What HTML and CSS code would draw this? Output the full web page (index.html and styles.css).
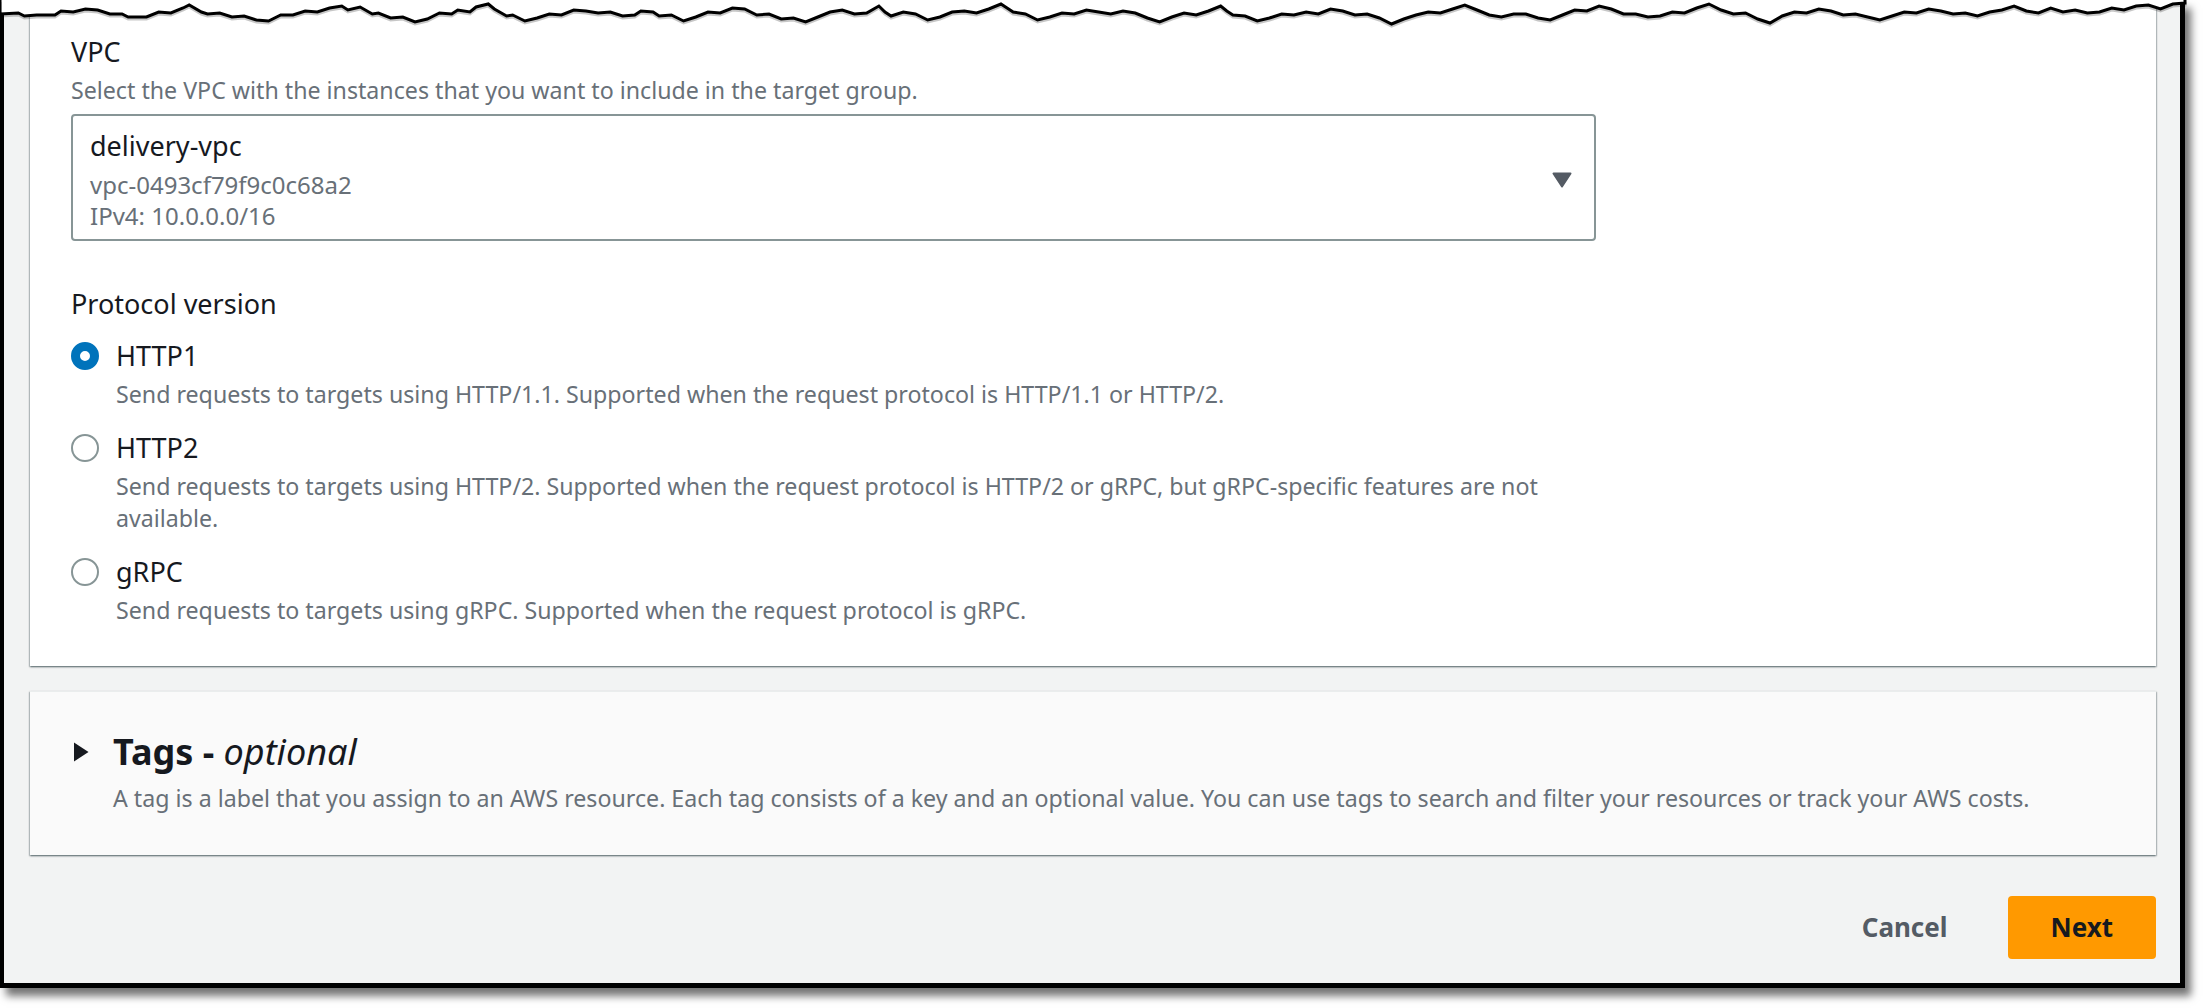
FILE: index.html
```html
<!DOCTYPE html>
<html lang="en">
<head>
<meta charset="utf-8">
<title>Target group - VPC and protocol</title>
<link rel="stylesheet" href="styles.css">
</head>
<body>
<div class="frame">
  <svg class="torn" viewBox="0 0 179 40" preserveAspectRatio="none" aria-hidden="true">
    <defs>
      <polyline id="edge" vector-effect="non-scaling-stroke" points="0,0 0,14 1.5,13 2,16 3,15 4.5,15 5,11 6,12 7,9 8,10 9,14 10,14 10.5,17 12,17 13,12 14,13 15,8 15.5,5 16.5,12 17,14 18,13 19,17 20,16 21,20 22,21 23,15 24,15 25,11 26,12 27,8 28,6 28.5,10 29.5,7 30.5,14 31,13 32,18 33,17 34,22 35,19 36,13 37,14 37.5,10 38.5,12 39,7 40,4 40.5,9 41.5,16 42,15 43,21 44,18 45,14 46,15 47,10 48,11 49,13 50,12 51,16 52,15 52.5,11 53.5,12 54,16 55,15 56,21 57,17 58,12 59,13 60,8 61,9 62,15 63,14 64,19 65,18 66,22 67,17 68,12 69,10 70,14 71,13 72,6 72.5,12 73,16 74,12 75,14 76,20 77,17 78,12 79,11 80,13 81,9 82,4 82.5,8 83,12 84,14 85,20 86,17 87,13 88,14 89,10 90,12 91,14 92,11 93,13 94,18 95,22 96,17 97,13 98,15 99,11 100,6 100.5,11 101,15 102,16 103,21 104,18 105,14 106,15 107,12 108,14 109,9 110,11 111,15 112,14 113,18 114,24 115,19 116,15 117,12 118,13 119,9 120,5 121,10 122,15 123,17 124,14 125,14 126,18 127,20 128,15 129,10 130,11 131,6 132,9 133,14 134,14 135,17 136,16 137,12 138,13 139,8 140,4 141,10 142,14 143,13 144,19 145,23 146,16 147,12 148,13 149,9 150,11 151,15 152,14 153,17 154,20 155,16 156,12 157,13 158,9 159,11 160,14 161,13 162,16 163,12 164,10 165,6 166,11 167,13 168,8 169,12 170,10 171,13 172,12 173,8 174,10 175,6 176,5 177,9 178,4 179,3 179,0"/>
    </defs>
    <use href="#edge" class="torn-fill"/>
    <use href="#edge" class="torn-shade" transform="translate(0 2)"/>
    <use href="#edge" class="torn-line"/>
  </svg>

  <section class="card">
    <div class="field">
      <div class="label">VPC</div>
      <div class="desc">Select the VPC with the instances that you want to include in the target group.</div>
      <div class="select">
        <div class="select-value">
          <div class="opt-name">delivery-vpc</div>
          <div class="opt-meta">vpc-0493cf79f9c0c68a2</div>
          <div class="opt-meta">IPv4: 10.0.0.0/16</div>
        </div>
        <svg class="caret" width="20" height="16" viewBox="0 0 20 16" aria-hidden="true"><path d="M1.5 1.5 H18.5 L10 14.5 Z"/></svg>
      </div>
    </div>

    <div class="field protocol">
      <div class="label">Protocol version</div>
      <div class="radios">
        <div class="radio-opt">
          <span class="radio checked"></span>
          <div class="radio-text">
            <div class="radio-label">HTTP1</div>
            <div class="desc radio-desc">Send requests to targets using HTTP/1.1. Supported when the request protocol is HTTP/1.1 or HTTP/2.</div>
          </div>
        </div>
        <div class="radio-opt">
          <span class="radio"></span>
          <div class="radio-text">
            <div class="radio-label">HTTP2</div>
            <div class="desc radio-desc">Send requests to targets using HTTP/2. Supported when the request protocol is HTTP/2 or gRPC, but gRPC-specific features are not available.</div>
          </div>
        </div>
        <div class="radio-opt">
          <span class="radio"></span>
          <div class="radio-text">
            <div class="radio-label">gRPC</div>
            <div class="desc radio-desc">Send requests to targets using gRPC. Supported when the request protocol is gRPC.</div>
          </div>
        </div>
      </div>
    </div>
  </section>

  <section class="card tags">
    <div class="tags-head">
      <svg class="expand" width="20" height="20" viewBox="0 0 20 20" aria-hidden="true"><path d="M3 0.5 L17.5 10 L3 19.5 Z"/></svg>
      <h2 class="tags-title">Tags - <em>optional</em></h2>
    </div>
    <div class="desc tags-desc">A tag is a label that you assign to an AWS resource. Each tag consists of a key and an optional value. You can use tags to search and filter your resources or track your AWS costs.</div>
  </section>

  <div class="actions">
    <button class="btn btn-link" type="button">Cancel</button>
    <button class="btn btn-primary" type="button">Next</button>
  </div>
</div>
</body>
</html>
```

FILE: styles.css
```css
* { box-sizing: border-box; }

html, body {
  margin: 0;
  padding: 0;
  background: #ffffff;
}

body {
  font-family: "Noto Sans", "Open Sans", sans-serif;
  color: #16191f;
  width: 2204px;
  height: 1008px;
  overflow: hidden;
}

.frame {
  position: relative;
  width: 2185px;
  height: 988px;
  background: #f2f3f3;
  border-left: 4px solid #000;
  border-right: 5px solid #000;
  border-bottom: 5px solid #000;
  padding: 0 24px 0 26px;
  display: flex;
  flex-direction: column;
  box-shadow: 6px 8px 8px rgba(0, 0, 0, 0.55);
}

.torn {
  position: absolute;
  left: -4px;
  top: 0;
  width: 2185px;
  height: 40px;
  z-index: 5;
  overflow: visible;
}
.torn-fill { fill: #ffffff; stroke: none; }
.torn-shade {
  fill: none;
  stroke: rgba(0, 0, 0, 0.22);
  stroke-width: 3px;
}
.torn-line {
  fill: none;
  stroke: #000;
  stroke-width: 3px;
  stroke-linejoin: miter;
}

.card {
  background: #ffffff;
  box-shadow: 0 1px 2px rgba(0, 28, 36, 0.45), 1px 1px 1px rgba(0, 28, 36, 0.15), -1px 1px 1px rgba(0, 28, 36, 0.15);
  padding: 34px 41px 40px;
}

.field {
  width: 1525px;
}

.label {
  font-size: 27px;
  line-height: 36px;
  color: #16191f;
}

.desc {
  font-size: 23.2px;
  line-height: 32px;
  color: #687078;
}

.field > .desc {
  margin-top: 4px;
}

.select {
  margin-top: 8px;
  border: 2px solid #879596;
  border-radius: 4px;
  padding: 12px 22px 8px 17px;
  display: flex;
  align-items: center;
  justify-content: space-between;
}

.opt-name {
  font-size: 27px;
  line-height: 36px;
  color: #16191f;
  margin-bottom: 5px;
}

.opt-meta {
  font-size: 24px;
  line-height: 31px;
  color: #687078;
}

.caret path {
  fill: #545b64;
  stroke: #545b64;
  stroke-width: 2;
  stroke-linejoin: round;
}

.protocol {
  margin-top: 45px;
}

.radios {
  margin-top: 16px;
  display: flex;
  flex-direction: column;
  gap: 20px;
}

.radio-opt {
  display: flex;
  align-items: flex-start;
  gap: 17px;
}

.radio {
  flex: none;
  width: 28px;
  height: 28px;
  margin-top: 4px;
  border-radius: 50%;
  border: 2px solid #879596;
  background: #fff;
}

.radio.checked {
  border: 9px solid #0073bb;
}

.radio-text {
  flex: 1;
}

.radio-label {
  font-size: 27px;
  line-height: 36px;
  color: #16191f;
}

.radio-desc {
  margin-top: 4px;
}

.tags {
  margin-top: 25px;
  background: #fafafa;
  border-top: 1px solid #eaeded;
  padding: 38px 41px 41px;
}

.tags-head {
  display: flex;
  align-items: center;
  height: 44px;
}

.expand {
  flex: none;
  margin-right: 22px;
}
.expand path { fill: #16191f; }

.tags-title {
  margin: 0;
  font-size: 36px;
  line-height: 44px;
  font-weight: 700;
  color: #16191f;
}
.tags-title em {
  font-weight: 400;
  font-style: italic;
}

.tags-desc {
  margin-top: 8px;
  margin-left: 42px;
}

.actions {
  margin-top: 41px;
  display: flex;
  justify-content: flex-end;
  gap: 17px;
}

.btn {
  height: 63px;
  padding: 0 43px;
  border-radius: 4px;
  border: 0;
  font-family: inherit;
  font-size: 26px;
  font-weight: 700;
  line-height: 63px;
}

.btn-link {
  background: transparent;
  color: #545b64;
}

.btn-primary {
  background: #ff9900;
  color: #16191f;
}
```
